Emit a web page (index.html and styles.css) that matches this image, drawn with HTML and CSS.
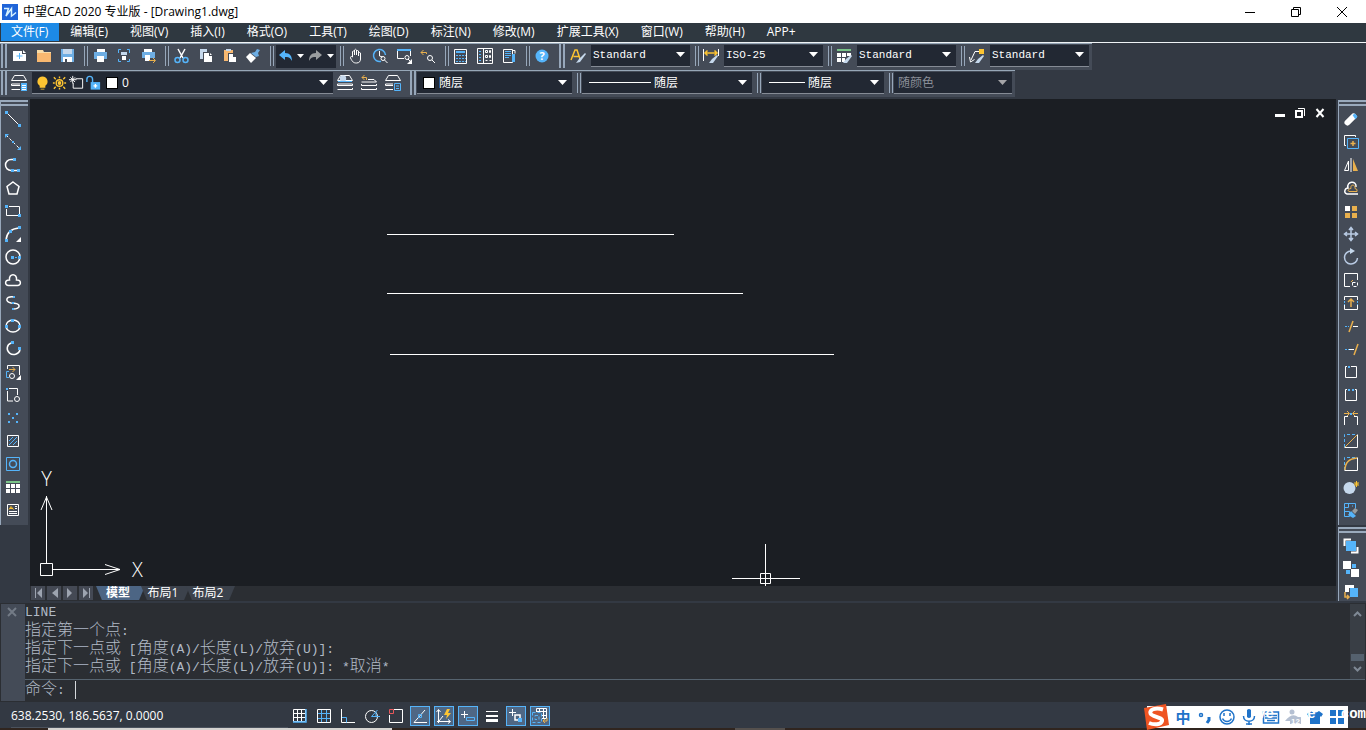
FILE: index.html
```html
<!DOCTYPE html>
<html lang="zh-CN">
<head>
<meta charset="utf-8">
<title>中望CAD 2020 专业版 - [Drawing1.dwg]</title>
<link rel="stylesheet" href="styles.css">
</head>
<body>
<svg class="defs" aria-hidden="true">
  <symbol id="arrow" viewBox="0 0 9 5"><path class="cur" d="M0 0h9L4.500 5z"/></symbol>
  <symbol id="stack" viewBox="0 0 18 18"><path class="w" d="M4.500 1.500h9l3 5h-15zM1.500 11.500V10h15v1.500zM1.500 15.500h15v-1.500"/></symbol>
</svg>

<header class="titlebar">
  <svg class="logo" viewBox="0 0 16 16"><path class="logobg" d="M0 0h16v16H0z"/><path class="logoline" d="M2 4.500h4.500L4 12l5.500-7.500V12l1.500-1 3-2.500"/></svg>
  <h1>中望CAD 2020 专业版 - [Drawing1.dwg]</h1>
  <div class="winctl">
    <button aria-label="最小化"><svg viewBox="0 0 12 12"><path d="M1 6.500h10"/></svg></button>
    <button aria-label="还原"><svg viewBox="0 0 12 12"><path d="M1.500 3.500h7v7h-7zM3.500 3.500v-2h7v7h-2"/></svg></button>
    <button aria-label="关闭"><svg viewBox="0 0 12 12"><path d="M1 1l10 10M11 1L1 11"/></svg></button>
  </div>
</header>

<nav class="menu">
  <button class="on">文件(F)</button><button>编辑(E)</button><button>视图(V)</button><button>插入(I)</button><button>格式(O)</button><button>工具(T)</button><button>绘图(D)</button><button>标注(N)</button><button>修改(M)</button><button>扩展工具(X)</button><button>窗口(W)</button><button>帮助(H)</button><button>APP+</button>
</nav>

<section class="bars">
  <div class="bar">
    <i class="grip wide"></i>
    <button class="tb" aria-label="新建"><svg viewBox="0 0 18 18"><path class="fw" d="M3 4h9v3h4v7H3z"/><path class="fw" d="M13 3l3 3h-3z"/><path class="b" d="M9.500 6v6M6.500 9h6"/></svg></button>
    <button class="tb" aria-label="打开"><svg viewBox="0 0 18 18"><path class="fs" d="M3 3h6l1 2h7v3H3z"/><path class="fp" d="M3 6h14v9H3z"/></svg></button>
    <button class="tb" aria-label="保存"><svg viewBox="0 0 18 18"><path class="fb2" d="M3 2h13v13H3z"/><path class="fg" d="M5 2h9v5H5z"/><path class="fw" d="M5 10h9v5H5z"/><path class="fd" d="M7 12h2v3H7z"/></svg></button>
    <i class="grip"></i>
    <button class="tb" aria-label="打印"><svg viewBox="0 0 18 18"><path class="fw" d="M6 2h8v3H6z"/><path class="fb2" d="M3 5h13v7H3z"/><path class="fw" d="M6 9h7v6H6z"/></svg></button>
    <button class="tb" aria-label="打印预览"><svg viewBox="0 0 18 18"><path class="b" d="M3.500 6V2.500H6M12 2.500h2.500V6M3.500 12v2.500H6M12 14.500h2.500V12"/><path class="fg" d="M6 5h6v3H6z"/><path class="fw" d="M7 9h4v4H7z"/></svg></button>
    <button class="tb" aria-label="发布"><svg viewBox="0 0 18 18"><path class="fw" d="M5 2h8v3H5z"/><path class="fb2" d="M3 5h13v6H3z"/><path class="fw" d="M6 8h5v6H6z"/><path class="o" d="M10 13.500h6M14 11l2.500 2.500L14 16"/></svg></button>
    <i class="grip"></i>
    <button class="tb" aria-label="剪切"><svg viewBox="0 0 18 18"><path class="w k" d="M6 2l5 9M13 2L8 11"/><circle class="b k" cx="5.500" cy="13" r="2.500"/><circle class="b k" cx="13.500" cy="13" r="2.500"/></svg></button>
    <button class="tb" aria-label="复制"><svg viewBox="0 0 18 18"><path class="fg" d="M4 2h7v10H4z"/><path class="fd" d="M7 5h7l3 3v8H7z"/><path class="fw" d="M8 6h5v3h3v6H8z"/><path class="fw" d="M14 6l2 2h-2z"/></svg></button>
    <button class="tb" aria-label="粘贴"><svg viewBox="0 0 18 18"><path class="fp" d="M4 3h9v11H4z"/><path class="fg" d="M6 2h5v2H6z"/><path class="fd" d="M8 6h6l3 3v7H8z"/><path class="fw" d="M9 7h4v3h3v5H9z"/></svg></button>
    <button class="tb" aria-label="格式刷"><svg viewBox="0 0 18 18"><path class="fb2" d="M13 2l3 1-2 3 1 3-3 1-5-4 4-1z"/><path class="fw" d="M6 6l6 5-5 5-5-6z"/></svg></button>
    <i class="grip"></i>
    <div class="history">
      <button class="tb s" aria-label="放弃"><svg viewBox="0 0 18 18"><path class="fb" d="M3 8l6-5v3c5 0 7 3 7 8-2-4-4-4-7-4v3z"/></svg></button>
      <button class="drop" aria-label="放弃列表"><svg><use href="#arrow"/></svg></button>
      <button class="tb s" aria-label="重做"><svg viewBox="0 0 18 18"><path class="fm" d="M16 8l-6-5v3c-5 0-7 3-7 8 2-4 4-4 7-4v3z"/></svg></button>
      <button class="drop" aria-label="重做列表"><svg><use href="#arrow"/></svg></button>
    </div>
    <i class="grip near"></i>
    <button class="tb" aria-label="平移"><svg viewBox="0 0 18 18"><path class="w" d="M5.500 10V4.500q1-1 2 0V8 3q1-1.500 2 0v5V4q1-1 2 0v5-3q1-1 2 0v6c0 2-1 4-4 4s-4-1-6-5c0-1 0-1.500 1-1.500z"/></svg></button>
    <button class="tb" aria-label="实时缩放"><svg viewBox="0 0 18 18"><path class="b k" d="M10 14.300A6 6 0 1 1 14.500 8"/><path class="w" d="M8.500 4v5l3 1"/><circle class="w" cx="12" cy="11.500" r="2"/><path class="w" d="M13.500 13l3 3"/></svg></button>
    <button class="tb" aria-label="窗口缩放"><svg viewBox="0 0 18 18"><path class="w" d="M9 11.500H2.500v-8h13V9"/><path class="fb" d="M2 2h14v2H2z"/><circle class="w" cx="12" cy="10.500" r="2"/><path class="w" d="M13 12l2 2"/><path class="fw" d="M17 12v5h-5z"/></svg></button>
    <button class="tb" aria-label="上一个视图"><svg viewBox="0 0 18 18"><path class="o" d="M7.500 7V5.500H2M4.500 3L2 5.500 4.500 8"/><circle class="w" cx="11" cy="11" r="2.500"/><path class="w" d="M13 13l3 3"/></svg></button>
    <i class="grip"></i>
    <button class="tb" aria-label="特性"><svg viewBox="0 0 18 18"><path class="w" d="M2.500 2.500h12v14h-12z"/><path class="fb" d="M4 4h9v2H4z"/><path class="b dot" d="M4 8.500h10M4 11.500h10M4 14.500h10"/></svg></button>
    <button class="tb" aria-label="设计中心"><svg viewBox="0 0 18 18"><path class="w" d="M1.500 1.500h15v15h-15zM7.500 2v14"/><path class="w" d="M9.500 3.500h2v2h-2zM13.500 3.500h1v2h-1zM9.500 8.500h2v2h-2zM13.500 8.500h1v2h-1zM9.500 13.500h2M13.500 13.500h2"/><path class="b dot" d="M3 4.500h3M3 7.500h3M3 10.500h3M3 13.500h3"/></svg></button>
    <button class="tb" aria-label="工具选项板"><svg viewBox="0 0 18 18"><path class="w" d="M3.500 2.500h9v13h-9zM13 3.500h2v3"/><path class="b" d="M5 4.500h6M5 6.500h6M5 8.500h6M5 10.500h4"/><path class="fb" d="M12 7h3v8h-3z"/></svg></button>
    <i class="grip"></i>
    <button class="tb" aria-label="帮助"><svg viewBox="0 0 18 18"><circle class="fb" cx="9" cy="9" r="6.500"/><text class="q" x="9" y="13">?</text></svg></button>
    <i class="grip wide mid"></i>
    <label class="tb" for="ts"><svg viewBox="0 0 18 18"><path class="y k" d="M2 13l4-10h2l3 9M4.500 9.500h5"/><path class="fg" d="M16 6l1 1-6 8-4 1 3-4z"/></svg></label>
    <span class="combo std"><select id="ts" aria-label="文字样式"><option>Standard</option></select><svg class="arr"><use href="#arrow"/></svg></span>
    <i class="grip"></i>
    <label class="tb" for="ds"><svg viewBox="0 0 18 18"><path class="w" d="M1.500 2v12M16.500 2v7"/><path class="y k" d="M3 6h12M5.500 3.500L3 6l2.500 2.500M12.500 3.500L15 6l-2.500 2.500"/><path class="fg" d="M15 8l1 1-5 7H7l3-4z"/></svg></label>
    <span class="combo std"><select id="ds" aria-label="标注样式"><option>ISO-25</option></select><svg class="arr"><use href="#arrow"/></svg></span>
    <i class="grip"></i>
    <label class="tb" for="bs"><svg viewBox="0 0 18 18"><path class="gr3" d="M2 3h14"/><path class="fw" d="M2 6h4v4H2zM7 6h4v4H7zM12 6h4v3h-4zM2 11h4v4H2zM7 11h3v4H7z"/><path class="fg" d="M16 8l1 1-5 7H8l3-4z"/></svg></label>
    <span class="combo std"><select id="bs" aria-label="表格样式"><option>Standard</option></select><svg class="arr"><use href="#arrow"/></svg></span>
    <i class="grip"></i>
    <label class="tb" for="ms"><svg viewBox="0 0 18 18"><path class="w" d="M11 4.500H7L3 13M1.500 10l1 5 4-2.500"/><path class="fy" d="M11 2h5v5h-5z"/><path class="fg" d="M15 8l1 1-5 7H7l3-4z"/></svg></label>
    <span class="combo std"><select id="ms" aria-label="多重引线样式"><option>Standard</option></select><svg class="arr"><use href="#arrow"/></svg></span>
  </div>

  <div class="bar">
    <i class="grip wide"></i>
    <button class="tb" aria-label="图层特性"><svg viewBox="0 0 18 18"><use href="#stack"/><path class="fd" d="M10 8h8v9h-8z"/><path class="fb" d="M11 9h6v8h-6z"/><path class="w" d="M12 11.500h4M12 13.500h4M12 15.500h4"/></svg></button>
    <span class="combo layer">
      <svg class="ic" viewBox="0 0 18 18"><path class="fy" d="M9 2a5.500 5.500 0 0 1 3 10v2H6v-2A5.500 5.500 0 0 1 9 2zM7 15h4v1H7z"/></svg>
      <svg class="ic" viewBox="0 0 18 18"><circle class="y k" cx="9" cy="9" r="3.500"/><circle class="fy" cx="9" cy="9" r="2"/><path class="y k" d="M9 2v2M9 14v2M2 9h2M14 9h2M3 3l2 2M15 3l-2 2M3 15l2-2M15 15l-2-2"/></svg>
      <svg class="ic" viewBox="0 0 18 18"><path class="w" d="M8 4.500h7.500v10h-10V9M1 5.500h8M5 1.500v8M2.500 3l5 5M7.500 3l-5 5"/></svg>
      <svg class="ic" viewBox="0 0 18 18"><path class="b k" d="M2 8V5a3 3 0 0 1 6 0v4"/><path class="fb" d="M6 8h10v8H6z"/><path class="w k" d="M11 10v4M9 12h4"/></svg>
      <i class="swatch"></i>
      <select aria-label="图层"><option>0</option></select><svg class="arr"><use href="#arrow"/></svg></span>
    <button class="tb" aria-label="置为当前"><svg viewBox="0 0 18 18"><use href="#stack"/><circle class="fg" cx="7" cy="4.500" r="3.200"/><path class="b" d="M2 7.500h14"/></svg></button>
    <button class="tb" aria-label="上一个图层"><svg viewBox="0 0 18 18"><path class="w" d="M8 5.500h6l2.500 2.500h-15M1.500 11.500V10M1.500 11.500h15V10M1.500 15.500V14M1.500 15.500h15V14"/><path class="o" d="M6.500 6V3.500H2M4.500 1L2 3.500 4.500 6"/></svg></button>
    <button class="tb" aria-label="图层状态"><svg viewBox="0 0 18 18"><use href="#stack"/><path class="fd" d="M9 8h9v9H9z"/><path class="b" d="M10.500 9.500h6v7h-6zM12 12h3M12 14.500h3"/></svg></button>
    <i class="grip wide mid"></i>
    <span class="combo color"><i class="swatch"></i><select aria-label="颜色"><option>随层</option></select><svg class="arr"><use href="#arrow"/></svg></span>
    <i class="grip"></i>
    <span class="combo ltype"><i class="sample"></i><select aria-label="线型"><option>随层</option></select><svg class="arr"><use href="#arrow"/></svg></span>
    <i class="grip"></i>
    <span class="combo lweight"><i class="sample"></i><select aria-label="线宽"><option>随层</option></select><svg class="arr"><use href="#arrow"/></svg></span>
    <i class="grip"></i>
    <span class="combo plot"><select aria-label="打印样式" disabled><option>随颜色</option></select><svg class="arr"><use href="#arrow"/></svg></span>
  </div>
</section>

<main class="work">
  <aside class="dock left"><div class="side tall"><i class="hgrip"></i>
    <button aria-label="直线"><svg viewBox="0 0 18 18"><path class="w" d="M3 3l13 13"/><path class="fb" d="M1 1h3v3H1zM14 14h3v3h-3z"/></svg></button>
    <button aria-label="构造线"><svg viewBox="0 0 18 18"><path class="w dash" d="M2 2l14 14"/><path class="fb" d="M1 1h4L1 5zM17 17h-4l4-4zM8 8h2v2H8z"/></svg></button>
    <button aria-label="多段线"><svg viewBox="0 0 18 18"><path class="w k" d="M10 3.500H7a5 5 0 0 0 0 11h8"/><path class="fb" d="M9 2h3v3H9zM7 13h3v3H7zM13 13h3v3h-3z"/></svg></button>
    <button aria-label="多边形"><svg viewBox="0 0 18 18"><path class="w k" d="M9 3l6 4.500L13 15H5L3 7.500z"/></svg></button>
    <button aria-label="矩形"><svg viewBox="0 0 18 18"><path class="w" d="M5 4.500h10.500V12M14 13.500H2.500V7"/><path class="fb" d="M1 3h3v3H1zM14 12h3v3h-3z"/></svg></button>
    <button aria-label="圆弧"><svg viewBox="0 0 18 18"><path class="w k" d="M2 15q1-11 13-12"/><path class="fb" d="M1 14h3v3H1zM5 5h3v3H5zM14 1h3v3h-3z"/><path class="fw" d="M17 12v5h-5z"/></svg></button>
    <button aria-label="圆"><svg viewBox="0 0 18 18"><circle class="w k" cx="9" cy="9" r="7"/><path class="fb" d="M7 8h3v3H7zM11 9h2v1h-2zM14 8h3v3h-3z"/></svg></button>
    <button aria-label="修订云线"><svg viewBox="0 0 18 18"><path class="w k" d="M4.500 14.500c-4 0-4-6 1-5.500-1-7 8-7 7 0 5-.5 5 5.500 1 5.500z"/></svg></button>
    <button aria-label="样条曲线"><svg viewBox="0 0 18 18"><path class="w k" d="M10 3c-9-1-9 5-3 6 11 0 10 6 2 6"/><path class="fb" d="M9 2h2v2H9zM8 8h2v2H8zM8 14h2v2H8z"/></svg></button>
    <button aria-label="椭圆"><svg viewBox="0 0 18 18"><ellipse class="w k" cx="9" cy="9" rx="7" ry="6"/><path class="fb" d="M7 2h3v3H7zM1 8h3v3H1zM14 8h3v3h-3z"/></svg></button>
    <button aria-label="椭圆弧"><svg viewBox="0 0 18 18"><path class="w k" d="M7 3a6.500 6 0 1 0 9 7"/><path class="fb" d="M7 1h3v3H7zM14 7h3v3h-3z"/></svg></button>
    <button aria-label="插入块"><svg viewBox="0 0 18 18"><path class="w" d="M3.500 6V2.500h12V12"/><path class="b" d="M5 8.500H2.500v6H5"/><path class="o" d="M5 6.500h6M8.500 4L11 6.500 8.500 9"/><circle class="w" cx="8" cy="13" r="2.500"/><path class="fw" d="M17 12v5h-5z"/></svg></button>
    <button aria-label="创建块"><svg viewBox="0 0 18 18"><path class="w" d="M5 2.500h8.500V9M3.500 5v10H9"/><path class="fb" d="M2 2h2v2H2z"/><circle class="w" cx="13" cy="13" r="2.500"/></svg></button>
    <button aria-label="点"><svg viewBox="0 0 18 18"><path class="fb" d="M4 4h2v2H4zM12 4h2v2h-2zM8 8h2v2H8zM4 12h2v2H4zM12 12h2v2h-2z"/></svg></button>
    <button aria-label="填充"><svg viewBox="0 0 18 18"><path class="w" d="M3.500 3.500h11v11h-11z"/><path class="b" d="M5 9l4-4M5 13l8-8M9 13l4-4"/></svg></button>
    <button aria-label="面域"><svg viewBox="0 0 18 18"><path class="b" d="M2.500 2.500h13v13h-13z"/><circle class="b k" cx="9" cy="9" r="3.500"/></svg></button>
    <button aria-label="表格"><svg viewBox="0 0 18 18"><path class="gr3" d="M2 4h14"/><path class="fw" d="M2 6h4v4H2zM7 6h4v4H7zM12 6h4v4h-4zM2 11h4v4H2zM7 11h4v4H7zM12 11h4v4h-4z"/></svg></button>
    <button aria-label="多行文字"><svg viewBox="0 0 18 18"><path class="w" d="M3.500 3.500h11v11h-11zM11 5.500h2M11 7.500h2M5 10.500h8M5 12.500h8"/><path class="y" d="M5 8.500l2-3 2.500 3M6 7.500h3"/></svg></button>
  </div></aside>

  <section class="canvas" aria-label="绘图区">
    <svg class="drawing">
      <path class="w" d="M357 135.500h287M357 194.500h356M360 255.500h444"/>
      <path class="w" d="M10.500 464.500h12v12h-12zM16.500 464V397M11 411l5.500-13 5.500 13M23 470.500h67M75 465.500l15 5-15 5"/>
      <text class="axis" x="16.500" y="387">Y</text><text class="axis" x="107.500" y="478">X</text>
      <path class="w" d="M735.500 445v42M702 479.500h68M730.500 474.500h10v10h-10z"/>
    </svg>
    <div class="docctl">
      <button aria-label="最小化文档"><svg viewBox="0 0 12 12"><path class="fw" d="M1 7h10v3H1z"/></svg></button>
      <button aria-label="还原文档"><svg viewBox="0 0 12 12"><path class="w kk" d="M2 4h6v6H2z"/><path class="w" d="M4 1.500h6.500V9"/></svg></button>
      <button aria-label="关闭文档"><svg viewBox="0 0 12 12"><path class="w kk" d="M2.500 2l7 8M9.500 2l-7 8"/></svg></button>
    </div>
  </section>

  <nav class="tabs">
    <button class="nv" aria-label="首个"><svg viewBox="0 0 14 14"><path d="M4 2h1v10H4zM11 2v10L6 7z"/></svg></button>
    <button class="nv" aria-label="上一个"><svg viewBox="0 0 14 14"><path d="M11 2v10L5 7z"/></svg></button>
    <button class="nv" aria-label="下一个"><svg viewBox="0 0 14 14"><path d="M4 2v10l5-5z"/></svg></button>
    <button class="nv" aria-label="末个"><svg viewBox="0 0 14 14"><path d="M4 2v10l5-5zM10 2h1v10h-1z"/></svg></button>
    <div class="sheets"><button class="sheet on">模型</button><button class="sheet">布局1</button><button class="sheet">布局2</button></div>
  </nav>

  <aside class="dock right"><div class="side tall"><i class="hgrip"></i>
    <button aria-label="删除"><svg viewBox="0 0 18 18"><path class="wh" d="M5.500 12.500l6-6"/><path class="bh" d="M10.500 5l2.500-1.500 2.500 3-2 3z"/></svg></button>
    <button aria-label="复制对象"><svg viewBox="0 0 18 18"><path class="w" d="M4 12.500H2.500v-10h11V4"/><path class="b" d="M5.500 5.500h11v10h-11z"/><path class="o k" d="M11 8v5M8.500 10.500h5"/></svg></button>
    <button aria-label="镜像"><svg viewBox="0 0 18 18"><path class="w" d="M6.500 5v9.500h-4zM9 2v14"/><path class="fo" d="M11 3l5 12h-5z"/></svg></button>
    <button aria-label="偏移"><svg viewBox="0 0 18 18"><path class="w k" d="M16 15H5c-4-1-2-6 1-6-2-7 9-8 8-1"/><path class="o" d="M15 12.500H7c-2-1 0-3 2-3-1-5 5-4 4 0l2 1z"/></svg></button>
    <button aria-label="阵列"><svg viewBox="0 0 18 18"><path class="fw" d="M3 4h5v5H3z"/><path class="fo" d="M10 4h5v5h-5zM3 11h5v5H3zM10 11h5v5h-5z"/></svg></button>
    <button aria-label="移动"><svg viewBox="0 0 18 18"><path class="g k" d="M9 3v12M3 9h12M7 5l2-2.500L11 5M7 13l2 2.500L11 13M5 7L2.500 9 5 11M13 7l2.500 2L13 11"/></svg></button>
    <button aria-label="旋转"><svg viewBox="0 0 18 18"><path class="g k" d="M9 3a6.500 6.500 0 1 0 6.500 7"/><path class="fg" d="M8 0l5 3-5 3z"/></svg></button>
    <button aria-label="缩放"><svg viewBox="0 0 18 18"><path class="w" d="M8 15.500H2.500v-13h13V9"/><path class="w dash" d="M10.500 11.500h5v4h-5z"/><path class="o" d="M11 9l-2 2"/></svg></button>
    <button aria-label="拉伸"><svg viewBox="0 0 18 18"><path class="w" d="M2.500 6V2.500h13V6M2.500 11v4.500h13V11"/><path class="b dot" d="M2.500 7v4M15.500 7v4"/><path class="o k" d="M9 13V6M6 8l3-3 3 3"/></svg></button>
    <button aria-label="修剪"><svg viewBox="0 0 18 18"><path class="o k" d="M11 4L7 15"/><path class="b dot" d="M3 9.500h4"/><path class="w" d="M11 9.500h5"/></svg></button>
    <button aria-label="延伸"><svg viewBox="0 0 18 18"><path class="o k" d="M16 4l-4 11"/><path class="b dot" d="M3 9.500h4"/><path class="w" d="M7 9.500h5"/></svg></button>
    <button aria-label="打断于点"><svg viewBox="0 0 18 18"><path class="w" d="M5 3.500H3.500v11h11v-11H9"/><path class="fb" d="M6 3h2v2H6z"/></svg></button>
    <button aria-label="打断"><svg viewBox="0 0 18 18"><path class="w" d="M5 3.500H3.500v11h11v-11H13"/><path class="fb" d="M6 3h2v2H6zM10 3h2v2h-2z"/></svg></button>
    <button aria-label="合并"><svg viewBox="0 0 18 18"><path class="w" d="M2.500 16V7.500H6M15.500 16V7.500H12"/><path class="o" d="M2 4.500h5M5 2l2.500 2.500L5 7M16 4.500h-5M13 2l-2.500 2.500L13 7"/><path class="fb" d="M8 4h2v2H8z"/></svg></button>
    <button aria-label="倒角"><svg viewBox="0 0 18 18"><path class="w" d="M2.500 15.500h13v-13"/><path class="b dash" d="M2.500 15V2.500H15"/><path class="o" d="M3 15L15 3"/></svg></button>
    <button aria-label="圆角"><svg viewBox="0 0 18 18"><path class="w" d="M2.500 15.500h13v-13"/><path class="b dash" d="M2.500 15V2.500H15"/><path class="o k" d="M3 15Q3 4 15 3"/></svg></button>
    <button aria-label="分解"><svg viewBox="0 0 18 18"><circle class="fg" cx="7.500" cy="10" r="6"/><path class="y" d="M14.500 3v6M12 6h5M12.500 4l4 4M16.500 4l-4 4"/></svg></button>
    <button aria-label="清理"><svg viewBox="0 0 18 18"><path class="b" d="M2.500 2.500h11v5M2.500 2.500v13h5v-5h-5M6.500 2.500v4h-4M10 5h1"/><path class="fb" d="M9 10l5 5-3 2-5-3z"/><path class="fm" d="M13 7l3 2-3 4-3-3z"/></svg></button>
  </div>
  <div class="side"><i class="hgrip"></i>
    <button aria-label="前置"><svg viewBox="0 0 18 18"><path class="w kk" d="M2.500 9V2.500H9M15.500 10v5.500H9"/><path class="fb" d="M4 4h10v10H4z"/></svg></button>
    <button aria-label="后置"><svg viewBox="0 0 18 18"><path class="fw" d="M1 1h8v8H1zM9 9h8v8H9z"/><path class="fb" d="M10 4h4v4h-4zM4 10h4v4H4z"/></svg></button>
    <button aria-label="置于对象之上"><svg viewBox="0 0 18 18"><path class="fw" d="M3 2h9v3H7v4H3z"/><path class="fb" d="M8 5h8v9H8z"/><path class="o k" d="M3 9v5h4M5 12l2 2-2 2"/></svg></button>
  </div></aside>
</main>

<section class="command">
  <div class="cmdgrip"><button aria-label="关闭命令行"><svg viewBox="0 0 12 12"><path d="M2 2l8 8M10 2l-8 8"/></svg></button></div>
  <div class="log">
    <p>LINE</p>
    <p><span>指定第一个点</span>:</p>
    <p><span>指定下一点或</span> [<span>角度</span>(A)/<span>长度</span>(L)/<span>放弃</span>(U)]:</p>
    <p><span>指定下一点或</span> [<span>角度</span>(A)/<span>长度</span>(L)/<span>放弃</span>(U)]: *<span>取消</span>*</p>
  </div>
  <div class="scroll"><svg viewBox="0 0 9 6"><path d="M1 5l3.500-3.500L8 5"/></svg><i></i><svg viewBox="0 0 9 6"><path d="M1 1l3.500 3.500L8 1"/></svg></div>
  <div class="prompt"><label for="cmd"><span>命令</span>:</label><i class="caret"></i><input id="cmd" type="text"></div>
</section>

<footer class="status">
  <output>638.2530, 186.5637, 0.0000</output>
  <div class="modes">
    <button aria-label="捕捉"><svg viewBox="0 0 18 18"><path class="w" d="M2.500 2.500h12v12h-12zM6.500 2v13M10.500 2v13M2 6.500h13M2 10.500h13"/><path class="b k" d="M15 2v13H2"/></svg></button>
    <button aria-label="栅格"><svg viewBox="0 0 18 18"><path class="b" d="M6.500 3v12M11.500 3v12M3 6.500h12M3 11.500h12"/><path class="w" d="M2.500 2.500h13v13h-13z"/></svg></button>
    <button aria-label="正交"><svg viewBox="0 0 18 18"><path class="w" d="M2.500 2v13.500H16"/><path class="b" d="M3 10.500h4.500v5"/></svg></button>
    <button aria-label="极轴"><svg viewBox="0 0 18 18"><circle class="w" cx="8.500" cy="9.500" r="6"/><path class="b" d="M14.500 3L8.500 9.500H17M13 5v4"/></svg></button>
    <button aria-label="对象捕捉"><svg viewBox="0 0 18 18"><path class="w" d="M7 2.500h8.500v13h-13V8"/><path class="r" d="M2.500 2.500h4v4h-4z"/></svg></button>
    <button class="on" aria-label="对象追踪"><svg viewBox="0 0 18 18"><path class="w" d="M14 3L3 15.500h13"/><path class="b" d="M7.500 7.500h3v3h-3z"/></svg></button>
    <button class="on" aria-label="动态UCS"><svg viewBox="0 0 18 18"><path class="w" d="M3.500 16V3M1.500 5l2-2.500 2 2.500M2 14.500h13M13 12.500l2.500 2-2.500 2M4 14l4-5"/><path class="fy" d="M12 2h3l-2 4h3l-5 6 1-4H9z"/></svg></button>
    <button class="on" aria-label="动态输入"><svg viewBox="0 0 18 18"><path class="w" d="M2 7.500h7M5.500 4v7"/><path class="b" d="M7.500 10.500h8v3h-8z"/></svg></button>
    <button aria-label="线宽显示"><svg viewBox="0 0 18 18"><path class="fw" d="M3 4h12v1H3zM3 8h12v2H3zM3 12h12v3H3z"/></svg></button>
    <button class="on" aria-label="选择循环"><svg viewBox="0 0 18 18"><path class="w" d="M2 5.500h7M5.500 2v7"/><path class="w k" d="M8 8h5v5H8z"/><path class="fb" d="M11 11h4v4h-4z"/></svg></button>
    <button class="on" aria-label="快捷特性"><svg viewBox="0 0 18 18"><path class="w" d="M5.500 1.500h10v10h-10zM8.500 2v9M12.500 2v9M6 4.500h9M6 8.500h9"/><path class="fn" d="M1 5h10v11H1z"/><path class="b dash" d="M1.500 5.500h9v10h-9zM4 8.500h4v4H4z"/><path class="o" d="M16 11v3h-4M14 12l-2 2 2 2"/></svg></button>
  </div>
</footer>
<div class="edge"><i></i><b></b></div>

<div class="ime">
  <svg class="sogou" viewBox="0 0 28 28"><path class="so" d="M2 5L24 1l3 21-22 5z"/><path class="ss" d="M21 6.500C13 4 7 7 8.500 10.500S21 14 20 18 12 22 7 20"/></svg>
  <button>中</button>
  <button aria-label="标点"><svg viewBox="0 0 18 18"><circle class="i" cx="5" cy="7" r="1.500"/><path class="ik" d="M13 9v3l-2 3"/></svg></button>
  <button aria-label="表情"><svg viewBox="0 0 18 18"><circle class="i" cx="9" cy="9" r="7"/><path class="i" d="M6 5v3M12 5v3M4.500 10.500c2 4 7 4 9 0"/></svg></button>
  <button aria-label="语音"><svg viewBox="0 0 18 18"><path class="fi" d="M7 2q2-2 4 0v7q-2 2-4 0z"/><path class="i" d="M3.500 8c0 7 11 7 11 0M9 13v4M6 16h6"/></svg></button>
  <button aria-label="键盘"><svg viewBox="0 0 18 18"><path class="i" d="M1.500 4h15v11h-15zM3 7.500h12M3 10h12M5 12.500h8"/></svg></button>
  <button aria-label="账户"><svg viewBox="0 0 18 18"><circle class="ig" cx="8" cy="4" r="2.500"/><path class="ig" d="M1 13q7-9 13-4h3v7H6v-3z"/><text class="twelve" x="7" y="16">12</text></svg></button>
  <button aria-label="皮肤"><svg viewBox="0 0 18 18"><path class="fi" d="M5 3q4 3 8 0l4 3-2 3-1-1v8H4V8L3 9 1 6z"/></svg></button>
  <button aria-label="工具箱"><svg viewBox="0 0 18 18"><path class="fi" d="M2 2h6v6H2zM10 2h6v6h-6zM2 10h6v6H2zM10 10h6v6h-6z"/></svg></button>
</div>
<div class="mark"><span>ve</span><span>ce</span><span>com</span></div>
</body>
</html>
```

FILE: styles.css
```css
* { box-sizing: border-box; }
html, body { height: 100%; }
body {
  margin: 0;
  display: flex;
  flex-direction: column;
  position: relative;
  overflow: hidden;
  background: #333943;
  color: #fff;
  font: 12px/16px "Open Sans", "Noto Sans CJK SC", sans-serif;
}
button, input, select { font: inherit; color: inherit; border: 0; padding: 0; margin: 0; background: none; }
svg { display: block; fill: none; }
p { margin: 0; }
i { display: block; }
.defs { position: absolute; width: 0; height: 0; }

/* icon palette */
.w, .b, .o, .y, .g, .r { fill: none; stroke-width: 1; }
.w { stroke: #fff; }
.b { stroke: #55b4fa; }
.o { stroke: #e9b04d; }
.y { stroke: #fcc432; }
.g { stroke: #b9cbe4; }
.r { stroke: #e8575a; }
.k { stroke-width: 1.5; }
.kk { stroke-width: 2; }
.dot { stroke-dasharray: 2 1; }
.dash { stroke-dasharray: 3 2; }
.fw { fill: #fff; }
.fb { fill: #55b4fa; }
.fb2 { fill: #6eaee4; }
.fo { fill: #e9b04d; }
.fp { fill: #f8b870; }
.fs { fill: #f8dca8; }
.fy { fill: #fcc432; }
.fg { fill: #c5d8ec; }
.fm { fill: #9a9d9f; }
.fd { fill: #444b57; }
.fn { fill: #4f6784; }
.gr3 { stroke: #79c388; stroke-width: 2; }
.wh { stroke-width: 6; stroke-linecap: round; stroke: #fff; }
.bh { fill: #55b4fa; }
.cur { fill: currentColor; }
.q { fill: #fff; font: bold 11px "Open Sans", sans-serif; text-anchor: middle; }

.titlebar { flex: none; height: 23px; display: flex; align-items: center; background: #fff; color: #000; padding: 0 1px 0 2px; }
.logo { width: 16px; height: 16px; }
.logobg { fill: #1f64d8; }
.logoline { stroke: #d7f2ff; stroke-width: 1.5; }
.titlebar h1 { margin: 0 auto 0 5px; font-size: 12px; font-weight: 400; }
.winctl { display: flex; }
.winctl button { width: 46px; height: 20px; display: grid; place-items: center; }
.winctl svg { width: 12px; height: 12px; stroke: #000; }

.menu { flex: none; height: 20px; display: flex; gap: 1px; background: #2f3840; border-bottom: 1px solid #f0f4f6; padding: 0 1px 1px; }
.menu button { padding: 0 11px 0 10px; white-space: nowrap; line-height: 18px; }
.menu .on { background: #1d8ae6; }

.bars { flex: none; height: 56px; display: flex; flex-direction: column; align-items: flex-start; }
.bar { display: flex; align-items: center; height: 27px; background: #444b57; border-top: 1px solid #97a7b7; padding: 0 3px 2px 1px; }
.grip { flex: none; width: 4px; height: 20px; margin-left: 5px; border: solid #97a7ba; border-width: 0 1px; }
.grip.wide { width: 6px; height: 24px; margin-left: 0; border-width: 0 2px; }
.grip.mid { margin: 0 1px 0 5px; }
.grip.near { margin-left: 4px; }
.tb { flex: none; width: 24px; height: 24px; display: grid; place-items: center; }
.tb svg, .ic { width: 18px; height: 18px; }
.tb.s { width: 18px; }
.drop { width: 12px; display: grid; place-items: center; }
.drop svg { width: 7px; height: 4px; }
.history { display: flex; align-items: center; width: 60px; height: 23px; background: #222833; margin-left: 2px; }

.combo { display: flex; align-items: center; height: 22px; background: #222833; border-bottom: 1px solid #858b95; padding: 0 5px 0 2px; margin-left: 1px; }
.combo select { flex: 1; min-width: 0; appearance: none; line-height: 20px; outline: 0; }
.combo select:disabled { opacity: 1; color: #8b8f98; }
.combo select:disabled + .arr { color: #a5a5a8; }
.arr { flex: none; width: 9px; height: 5px; }
.std { width: 99px; padding-bottom: 2px; font-family: "Liberation Mono", monospace; font-size: 11px; }
.layer { width: 301px; }
.layer .ic { width: 17px; }
.swatch { flex: none; width: 12px; height: 12px; background: #fff; border: 1px solid #000; margin: 0 4px; }
.sample { flex: none; height: 1px; background: #fff; margin: 0 3px 0 5px; }
.color { width: 155px; margin-left: 0; }
.ltype { width: 170px; }
.ltype .sample { width: 62px; }
.lweight { width: 122px; }
.lweight .sample { width: 36px; }
.plot { width: 118px; padding-left: 4px; }

.work { flex: 1; min-height: 0; display: grid; grid-template: minmax(0, 1fr) 15px / 30px minmax(0, 1fr) 30px; }
.dock { grid-row: 1 / 3; padding: 1px 2px 0 0; }
.left { grid-column: 1; }
.right { grid-column: 3; padding: 1px 0 0 2px; }
.side { background: #444b57; border-left: 1px solid #97a7ba; display: flex; flex-direction: column; align-items: flex-start; }
.side.tall { padding-bottom: 4px; margin-bottom: 2px; }
.hgrip { width: 100%; height: 6px; margin-bottom: 1px; border: solid #9aaabd; border-width: 2px 0; }
.side button { width: 24px; height: 23px; display: grid; place-items: center; }
.side svg { width: 18px; height: 18px; }
.canvas { grid-area: 1 / 2; background: #1b1e23; position: relative; }
.drawing { width: 100%; height: 100%; }
.axis { fill: #fff; font: 300 20px "Open Sans", sans-serif; text-anchor: middle; }
.docctl { position: absolute; top: 8px; right: 6px; display: flex; }
.docctl button { width: 20px; display: grid; place-items: center; }
.docctl svg { width: 12px; height: 12px; }

.tabs { grid-area: 2 / 2; display: flex; background: #2b2e33; padding-left: 1px; gap: 2px; }
.nv { width: 14px; height: 14px; background: #444954; }
.nv svg { width: 14px; height: 14px; fill: #9da4b0; }
.sheets { display: flex; padding-left: 1px; }
.sheet { height: 14px; line-height: 12px; width: 49px; margin-right: -4px; padding-right: 5px; background: #3c424c; clip-path: polygon(0 0, 100% 0, 88% 100%, 12% 100%); white-space: nowrap; }
.sheet.on { background: #4c6584; font-weight: 700; position: relative; }

.command { flex: none; height: 101px; display: grid; grid-template: 75px 22px / 24px minmax(0, 1fr) 15px; padding: 1px 1px; background: #2b2e33; border-top: 2px solid #333943; font-family: "Liberation Mono", "Noto Sans CJK SC", monospace; font-size: 13px; color: #b1bac6; }
.cmdgrip { grid-row: 1 / 3; background: #444b57; padding: 2px 5px; }
.cmdgrip svg { width: 12px; height: 12px; stroke: #737b86; stroke-width: 2; }
.log p { height: 18px; line-height: 18px; white-space: pre; }
.log span, .prompt span { font-size: 16px; font-weight: 300; }
.scroll { background: #393e45; display: flex; flex-direction: column; align-items: center; padding: 7px 0; }
.scroll svg { width: 9px; height: 6px; stroke: #7f8995; stroke-width: 2; }
.scroll i { width: 13px; height: 7px; background: #55616e; margin: auto 0 5px; }
.prompt { grid-column: 2 / 4; display: flex; align-items: center; border-top: 1px solid #56636f; line-height: 20px; }
.caret { width: 1px; height: 18px; background: #d5d8dc; margin: 0 4px 2px 10px; }
.prompt input { flex: 1; outline: 0; caret-color: transparent; }

.status { flex: none; height: 26px; display: flex; align-items: center; padding: 2px 0 0 11px; }
.status output { width: 277px; line-height: 22px; border-bottom: 1px solid #4b525d; }
.modes { display: flex; gap: 4px; padding: 2px; }
.modes button { width: 20px; height: 20px; display: grid; place-items: center; border: 1px solid transparent; }
.modes .on { background: #4f6784; border-color: #55b4fa; }
.modes svg { width: 18px; height: 18px; }
.edge { flex: none; height: 2px; display: flex; background: #30251f; padding-left: 48px; gap: 343px; }
.edge i { width: 344px; background: #d5d3d0; }
.edge b { width: 50px; background: #55504d; }

.ime { position: absolute; right: 18px; bottom: 2px; height: 22px; display: flex; align-items: center; background: #fff; }
.ime button { width: 22px; height: 22px; display: grid; place-items: center; color: #1f73c9; font-size: 15px; font-weight: 700; }
.ime svg { width: 18px; height: 18px; }
.ime .sogou { width: 28px; height: 28px; margin: 0 2px 0 -5px; }
.so { fill: #ef5422; }
.ss { stroke: #fff; stroke-width: 4; }
.i { stroke: #1f73c9; stroke-width: 1.5; }
.ik { stroke: #1f73c9; stroke-width: 3; }
.fi { fill: #1f73c9; }
.ig { fill: #b5c0d2; }
.twelve { font: bold 8px "Liberation Sans", sans-serif; fill: #fff; }
.mark { position: absolute; right: 0; bottom: 7px; display: flex; gap: 25px; font: 700 14px/18px "Liberation Mono", monospace; pointer-events: none; }
```
